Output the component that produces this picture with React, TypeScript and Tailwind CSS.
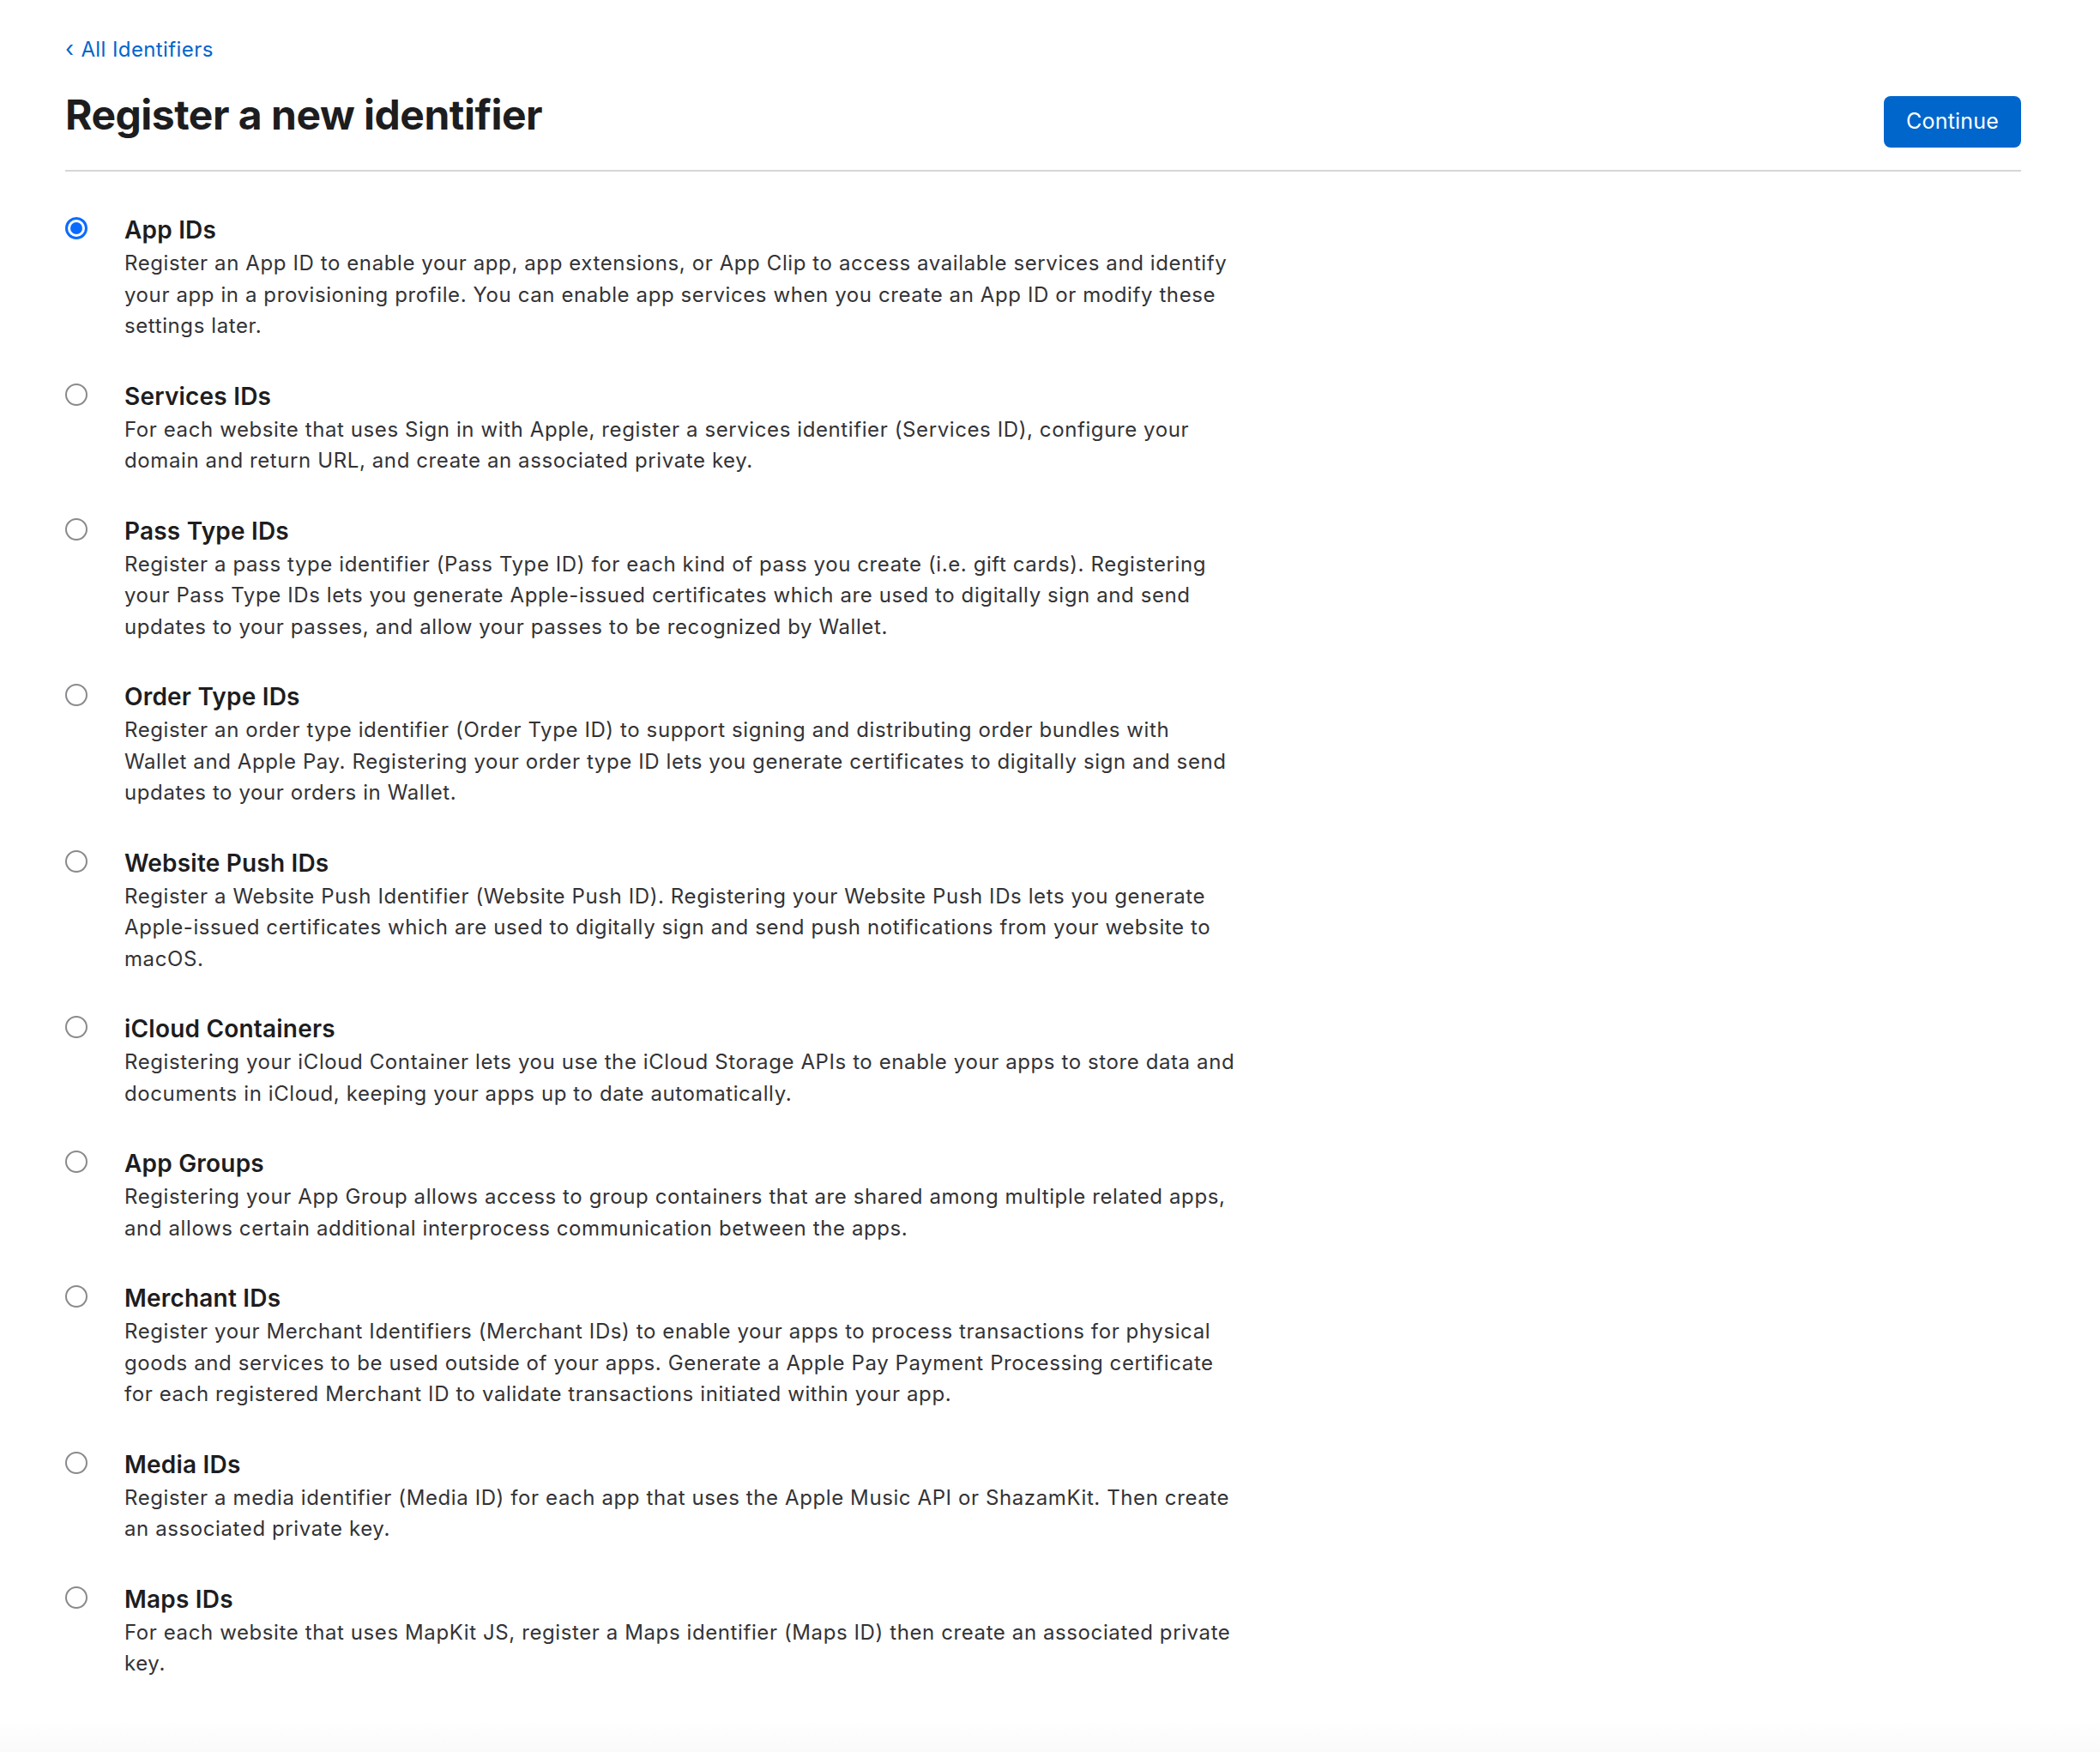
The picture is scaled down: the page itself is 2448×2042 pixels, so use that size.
import React, { useState } from 'react';

const IDENTIFIERS = [
  {
    id: 'app',
    name: 'App IDs',
    lines: [
      'Register an App ID to enable your app, app extensions, or App Clip to access available services and identify',
      'your app in a provisioning profile. You can enable app services when you create an App ID or modify these',
      'settings later.',
    ],
  },
  {
    id: 'services',
    name: 'Services IDs',
    lines: [
      'For each website that uses Sign in with Apple, register a services identifier (Services ID), configure your',
      'domain and return URL, and create an associated private key.',
    ],
  },
  {
    id: 'pass',
    name: 'Pass Type IDs',
    lines: [
      'Register a pass type identifier (Pass Type ID) for each kind of pass you create (i.e. gift cards). Registering',
      'your Pass Type IDs lets you generate Apple-issued certificates which are used to digitally sign and send',
      'updates to your passes, and allow your passes to be recognized by Wallet.',
    ],
  },
  {
    id: 'order',
    name: 'Order Type IDs',
    lines: [
      'Register an order type identifier (Order Type ID) to support signing and distributing order bundles with',
      'Wallet and Apple Pay. Registering your order type ID lets you generate certificates to digitally sign and send',
      'updates to your orders in Wallet.',
    ],
  },
  {
    id: 'push',
    name: 'Website Push IDs',
    lines: [
      'Register a Website Push Identifier (Website Push ID). Registering your Website Push IDs lets you generate',
      'Apple-issued certificates which are used to digitally sign and send push notifications from your website to',
      'macOS.',
    ],
  },
  {
    id: 'icloud',
    name: 'iCloud Containers',
    lines: [
      'Registering your iCloud Container lets you use the iCloud Storage APIs to enable your apps to store data and',
      'documents in iCloud, keeping your apps up to date automatically.',
    ],
  },
  {
    id: 'groups',
    name: 'App Groups',
    lines: [
      'Registering your App Group allows access to group containers that are shared among multiple related apps,',
      'and allows certain additional interprocess communication between the apps.',
    ],
  },
  {
    id: 'merchant',
    name: 'Merchant IDs',
    lines: [
      'Register your Merchant Identifiers (Merchant IDs) to enable your apps to process transactions for physical',
      'goods and services to be used outside of your apps. Generate a Apple Pay Payment Processing certificate',
      'for each registered Merchant ID to validate transactions initiated within your app.',
    ],
  },
  {
    id: 'media',
    name: 'Media IDs',
    lines: [
      'Register a media identifier (Media ID) for each app that uses the Apple Music API or ShazamKit. Then create',
      'an associated private key.',
    ],
  },
  {
    id: 'maps',
    name: 'Maps IDs',
    lines: [
      'For each website that uses MapKit JS, register a Maps identifier (Maps ID) then create an associated private',
      'key.',
    ],
  },
];

function Radio({ checked }: { checked: boolean }) {
  return checked ? (
    <span className="mt-[3px] w-[26px] h-[26px] shrink-0 rounded-full border-[3px] border-[#0a6cff] flex items-center justify-center">
      <span className="w-[14px] h-[14px] rounded-full bg-[#0a6cff]" />
    </span>
  ) : (
    <span className="mt-[3px] w-[26px] h-[26px] shrink-0 rounded-full border-2 border-[#8a8a8e] bg-white" />
  );
}

export default function App() {
  const [selected, setSelected] = useState('app');

  return (
    <div className="min-h-screen bg-white font-['Inter','Liberation_Sans',sans-serif] text-[#1d1d1f]">
      <div className="pl-[76px] pr-[92px] pt-[40px]">
        {/* Back link */}
        <a href="#" className="text-[24px] leading-[36px] tracking-[0.4px] text-[#0066cc] flex items-center gap-[8px]">
          <span className="text-[26px] -mt-[2px]">‹</span>
          <span>All Identifiers</span>
        </a>

        {/* Header */}
        <div className="mt-[30px] pb-[26px] border-b-2 border-[#d6d6d9] flex items-start justify-between">
          <h1 className="text-[48px] leading-[56px] font-bold tracking-[-0.5px]">Register a new identifier</h1>
          <button className="mt-[6px] h-[60px] px-[26px] rounded-[8px] bg-[#0066cc] text-white text-[25px] tracking-[0.2px]">
            Continue
          </button>
        </div>

        {/* Identifier types */}
        <div className="pt-[50px] flex flex-col gap-[45px]">
          {IDENTIFIERS.map(item => (
            <label
              key={item.id}
              className="flex items-start gap-[43px] cursor-pointer"
              onClick={() => setSelected(item.id)}
            >
              <Radio checked={selected === item.id} />
              <div>
                <div className="text-[28px] leading-[36px] font-semibold tracking-[0.2px]">{item.name}</div>
                <div className="mt-[3px] text-[24px] leading-[36.5px] tracking-[0.6px] text-[#333336] whitespace-nowrap">
                  {item.lines.map((line, i) => (
                    <div key={i}>{line}</div>
                  ))}
                </div>
              </div>
            </label>
          ))}
        </div>
      </div>

      {/* Footer edge */}
      <div className="mt-[46px] h-[60px] bg-gradient-to-b from-white to-[#f7f7f7]" />
    </div>
  );
}
